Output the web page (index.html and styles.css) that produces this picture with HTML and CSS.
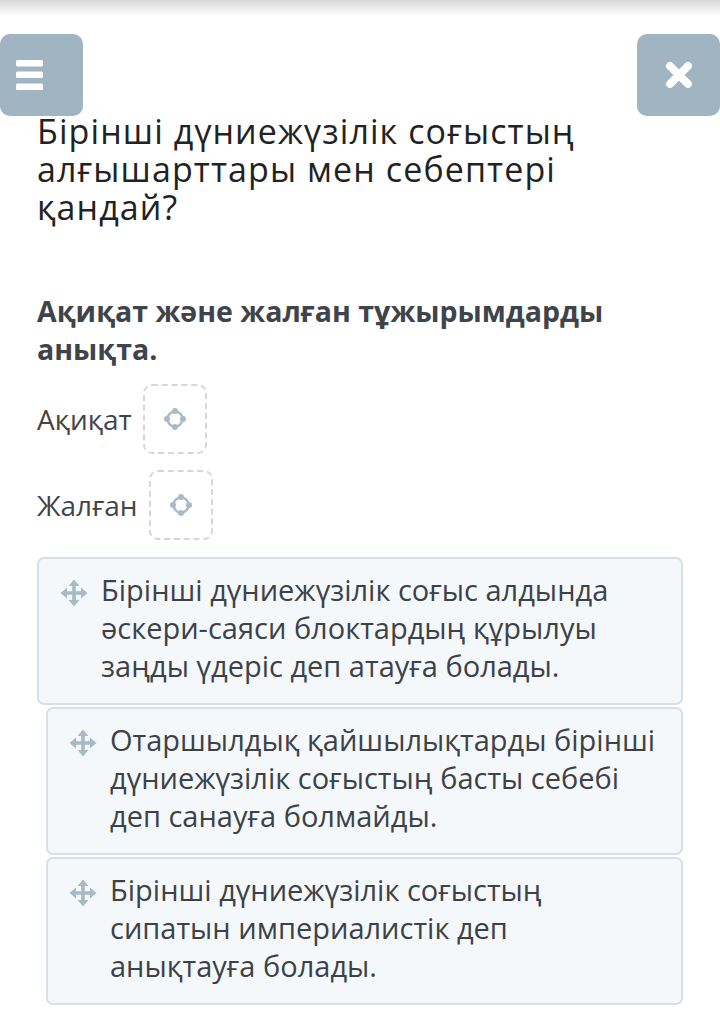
FILE: index.html
```html
<!DOCTYPE html>
<html lang="kk">
<head>
  <meta charset="UTF-8" />
  <meta name="viewport" content="width=device-width, initial-scale=1" />
  <title>Тапсырма</title>
  <link rel="stylesheet" href="styles.css">
</head>
<body>

  <div class="top-shade"></div>

  <header class="toolbar">
    <button class="tool-btn menu-btn" aria-label="Мәзір">
      <svg width="27" height="30" viewBox="0 0 27 30">
        <rect x="0" y="0" width="27" height="6.5" rx="1.5" fill="#fff"/>
        <rect x="0" y="11.5" width="27" height="6.5" rx="1.5" fill="#fff"/>
        <rect x="0" y="23.5" width="27" height="6.5" rx="1.5" fill="#fff"/>
      </svg>
    </button>
    <button class="tool-btn" aria-label="Жабу">
      <svg width="30" height="30" viewBox="0 0 30 30">
        <path d="M6 6 L24 24 M24 6 L6 24" stroke="#fff" stroke-width="8" stroke-linecap="round"/>
      </svg>
    </button>
  </header>

  <h1 class="question">Бірінші дүниежүзілік соғыстың алғышарттары мен себептері қандай?</h1>

  <p class="task">Ақиқат және жалған тұжырымдарды анықта.</p>

  <div class="zones">
    <div class="zone-row">
      <span class="zone-label">Ақиқат</span>
      <div class="dropzone">
        <svg width="26" height="26" viewBox="0 0 26 26">
          <circle cx="13" cy="13" r="7.5" fill="none" stroke="#a9bac7" stroke-width="2.4"/>
          <circle cx="13" cy="5" r="3" fill="#a9bac7"/>
          <circle cx="13" cy="21" r="3" fill="#a9bac7"/>
          <circle cx="5" cy="13" r="3" fill="#a9bac7"/>
          <circle cx="21" cy="13" r="3" fill="#a9bac7"/>
        </svg>
      </div>
    </div>
    <div class="zone-row">
      <span class="zone-label">Жалған</span>
      <div class="dropzone">
        <svg width="26" height="26" viewBox="0 0 26 26">
          <circle cx="13" cy="13" r="7.5" fill="none" stroke="#a9bac7" stroke-width="2.4"/>
          <circle cx="13" cy="5" r="3" fill="#a9bac7"/>
          <circle cx="13" cy="21" r="3" fill="#a9bac7"/>
          <circle cx="5" cy="13" r="3" fill="#a9bac7"/>
          <circle cx="21" cy="13" r="3" fill="#a9bac7"/>
        </svg>
      </div>
    </div>
  </div>

  <div class="cards">
    <div class="card first">
      <svg class="move" width="28" height="28" viewBox="0 0 28 28">
        <path d="M14 0.5 L19.5 7 H15.8 V12.2 H21 V8.5 L27.5 14 L21 19.5 V15.8 H15.8 V21 H19.5 L14 27.5 L8.5 21 H12.2 V15.8 H7 V19.5 L0.5 14 L7 8.5 V12.2 H12.2 V7 H8.5 Z" fill="#a9bac7"/>
      </svg>
      <p>Бірінші дүниежүзілік соғыс алдында әскери-саяси блоктардың құрылуы заңды үдеріс деп атауға болады.</p>
    </div>
    <div class="card">
      <svg class="move" width="28" height="28" viewBox="0 0 28 28">
        <path d="M14 0.5 L19.5 7 H15.8 V12.2 H21 V8.5 L27.5 14 L21 19.5 V15.8 H15.8 V21 H19.5 L14 27.5 L8.5 21 H12.2 V15.8 H7 V19.5 L0.5 14 L7 8.5 V12.2 H12.2 V7 H8.5 Z" fill="#a9bac7"/>
      </svg>
      <p>Отаршылдық қайшылықтарды бірінші дүниежүзілік соғыстың басты себебі деп санауға болмайды.</p>
    </div>
    <div class="card">
      <svg class="move" width="28" height="28" viewBox="0 0 28 28">
        <path d="M14 0.5 L19.5 7 H15.8 V12.2 H21 V8.5 L27.5 14 L21 19.5 V15.8 H15.8 V21 H19.5 L14 27.5 L8.5 21 H12.2 V15.8 H7 V19.5 L0.5 14 L7 8.5 V12.2 H12.2 V7 H8.5 Z" fill="#a9bac7"/>
      </svg>
      <p>Бірінші дүниежүзілік соғыстың сипатын империалистік деп анықтауға болады.</p>
    </div>
  </div>

</body>
</html>
```

FILE: styles.css
```css
* {
  margin: 0;
  padding: 0;
  box-sizing: border-box;
}
body {
  font-family: 'Open Sans', 'Noto Sans', sans-serif;
  background: #fff;
  color: #333;
  position: relative;
}
.top-shade {
  height: 16px;
  background: linear-gradient(#d8d8d8, #fff);
}
.toolbar {
  display: flex;
  justify-content: space-between;
  margin-top: 18px;
  position: relative;
  z-index: 1;
}
.tool-btn {
  width: 83px;
  height: 82px;
  border: none;
  border-radius: 10px;
  background: #a1b4c2;
  display: flex;
  align-items: center;
  justify-content: center;
}
.menu-btn {
  justify-content: flex-start;
  padding-left: 16px;
}
.question {
  font-weight: 400;
  font-size: 34px;
  line-height: 38px;
  letter-spacing: 1.1px;
  color: #222;
  margin: -4px 60px 0 37px;
}
.task {
  font-weight: 700;
  font-size: 28.5px;
  line-height: 38px;
  color: #3f444a;
  margin: 66px 60px 0 37px;
}
.zones {
  display: flex;
  flex-direction: column;
  gap: 16px;
  margin: 16px 0 0 37px;
}
.zone-row {
  display: flex;
  align-items: center;
  gap: 11px;
}
.zone-label {
  font-size: 28px;
  color: #444;
}
.dropzone {
  width: 64px;
  height: 70px;
  border: 2px dashed #d4d7da;
  border-radius: 9px;
  display: flex;
  align-items: center;
  justify-content: center;
}
.cards {
  display: flex;
  flex-direction: column;
  gap: 2px;
  margin: 17px 37px 0 46px;
}
.card {
  display: flex;
  align-items: flex-start;
  gap: 13px;
  background: #f4f8fb;
  border: 2px solid #d8dfe5;
  border-radius: 7px;
  padding: 12px 22px 18px 21px;
  min-height: 146px;
}
.card.first {
  margin-left: -9px;
}
.card .move {
  flex: none;
  margin-top: 8px;
}
.card p {
  font-size: 29px;
  line-height: 38px;
  color: #3d4247;
}
```
